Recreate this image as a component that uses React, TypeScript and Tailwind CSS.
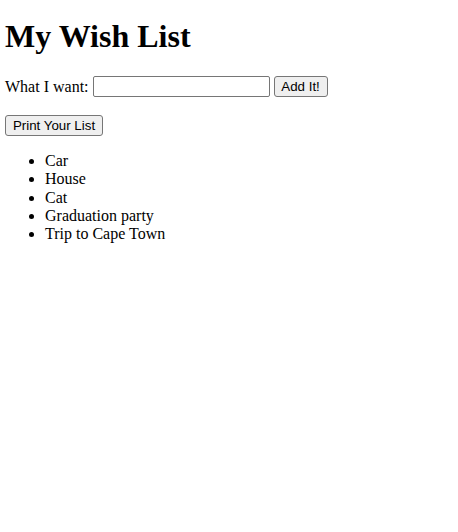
const items = ["Car", "House", "Cat", "Graduation party", "Trip to Cape Town"];

const btn =
  "h-[21px] px-[6px] bg-[#efefef] border border-[#767676] rounded-[3px] text-[13.33px] leading-[15px] text-black font-['Liberation_Sans',Arial,sans-serif]";

export default function App() {
  return (
    <div className="min-h-[532px] bg-white px-[5px] pt-[18px] text-black font-['Liberation_Serif','Times_New_Roman',serif] text-[16px]">
      <h1 className="text-[32px] font-bold leading-[37px]">My Wish List</h1>

      <div className="mt-[21px] flex items-center h-[21px]">
        <span className="leading-[18px]">What I want:</span>
        <input
          type="text"
          className="ml-[4px] w-[177px] h-[21px] px-[2px] border border-[#767676] rounded-[2px] text-[13.33px] font-['Liberation_Sans',Arial,sans-serif]"
        />
        <button className={`ml-[4px] w-[54px] ${btn}`}>Add It!</button>
      </div>

      <div className="mt-[18px] flex">
        <button className={`w-[98px] ${btn}`}>Print Your List</button>
      </div>

      <ul className="mt-[16px] list-disc pl-[40px] leading-[18.3px]">
        {items.map((item) => (
          <li key={item}>{item}</li>
        ))}
      </ul>
    </div>
  );
}
